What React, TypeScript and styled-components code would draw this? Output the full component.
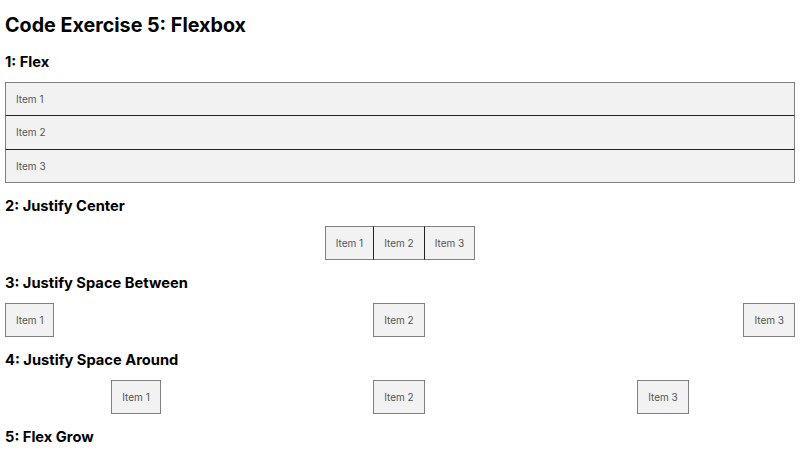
import React from 'react';
import styled, { createGlobalStyle, css } from 'styled-components';

const GlobalStyle = createGlobalStyle`
    body {
        margin: 0;
        background: #ffffff;
        font-family: Inter, "Noto Sans", Arial, sans-serif;
        color: #000;
    }
`

const Page = styled.div`
    padding: 0 5px;
`

const Title = styled.h1`
    font-size: 19.7px;
    line-height: 24px;
    font-weight: 700;
    margin: 13px 0 2px;
`

const Section = styled.section`
    padding-top: 14px;
`

const SectionTitle = styled.h2`
    font-size: 14.7px;
    line-height: 18px;
    font-weight: 700;
    margin: 0 0 11px;
`

const FlexBox = styled.div<{ $justify?: string; $column?: boolean }>`
    display: flex;
    flex-direction: ${p => (p.$column ? 'column' : 'row')};
    justify-content: ${p => p.$justify || 'flex-start'};
`

const Item = styled.div<{ $joined?: 'row' | 'column' }>`
    background: #f2f2f2;
    color: #555;
    border: 1px solid #808080;
    padding: 10px;
    font-size: 10px;
    font-weight: 400;
    line-height: ${p => (p.$joined === 'column' ? '12.33px' : '12px')};
    white-space: nowrap;

    ${p => p.$joined === 'column' && css`
        &:not(:first-child) {
            margin-top: -1px;
            border-top-color: #222;
        }
    `}
    ${p => p.$joined === 'row' && css`
        &:not(:first-child) {
            margin-left: -1px;
            border-left-color: #222;
        }
    `}
`

const items = ['Item 1', 'Item 2', 'Item 3'];

const sections = [
    { title: '2: Justify Center', justify: 'center', joined: true },
    { title: '3: Justify Space Between', justify: 'space-between', joined: false },
    { title: '4: Justify Space Around', justify: 'space-around', joined: false },
];

export const App = () => {
    return (
        <React.Fragment>
            <GlobalStyle />
            <Page>
                <Title>Code Exercise 5: Flexbox</Title>

                <Section>
                    <SectionTitle>1: Flex</SectionTitle>
                    <FlexBox $column>
                        {items.map(i => <Item $joined="column" key={i}>{i}</Item>)}
                    </FlexBox>
                </Section>

                {sections.map(s => (
                    <Section key={s.title}>
                        <SectionTitle>{s.title}</SectionTitle>
                        <FlexBox $justify={s.justify}>
                            {items.map(i => (
                                <Item $joined={s.joined ? 'row' : undefined} key={i}>{i}</Item>
                            ))}
                        </FlexBox>
                    </Section>
                ))}

                <Section>
                    <SectionTitle>5: Flex Grow</SectionTitle>
                </Section>
            </Page>
        </React.Fragment>
    )
}

export default App
